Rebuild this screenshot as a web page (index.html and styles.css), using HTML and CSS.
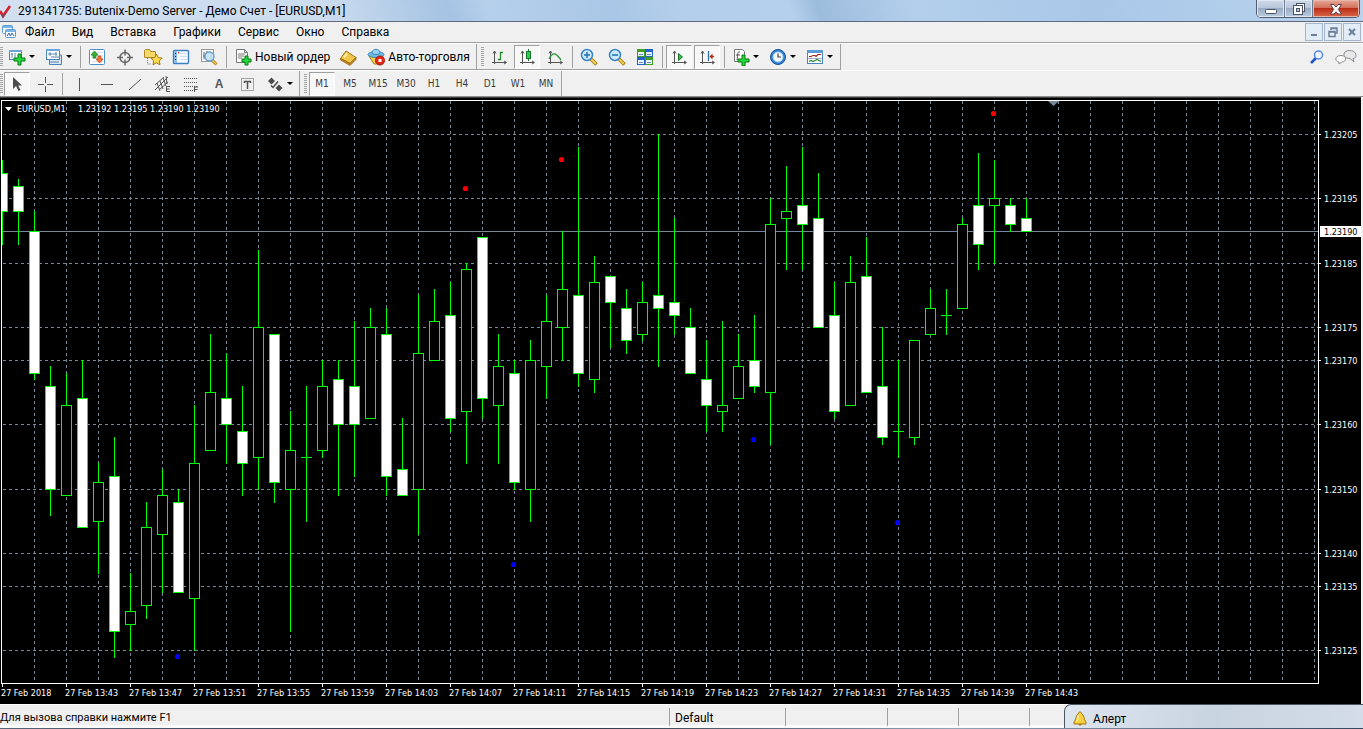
FILE: index.html
```html
<!DOCTYPE html>
<html lang="ru">
<head>
<meta charset="utf-8">
<title>291341735: Butenix-Demo Server - Демо Счет - [EURUSD,M1]</title>
<link rel="stylesheet" href="styles.css">
</head>
<body>
<header class="titlebar">
  <svg class="logo" width="12" height="18" viewBox="0 0 12 18"><path d="M0 9l3 5L10 4" fill="none" stroke="#d3202c" stroke-width="2.6"/><path d="M2 13l1 2 2-3" fill="none" stroke="#7c4a58" stroke-width="1.5"/></svg>
  <h1 class="title">291341735: Butenix-Demo Server - Демо Счет - [EURUSD,M1]</h1>
  <div class="winbuttons">
    <button class="win" aria-label="Свернуть"><svg width="14" height="14" viewBox="0 0 14 14"><rect x="1.500" y="7.500" width="11" height="4" rx="1" fill="#fff" stroke="#4a5363"/></svg></button>
    <button class="win" aria-label="Восстановить"><svg width="14" height="14" viewBox="0 0 14 14"><rect x="4.500" y="1.500" width="8" height="8" fill="#fff" stroke="#4a5363"/><rect x="1.500" y="3.500" width="9" height="9" fill="#fff" stroke="#4a5363"/><rect x="4.500" y="6.500" width="3" height="3" fill="#b9c8dc" stroke="#4a5363"/></svg></button>
    <button class="win close" aria-label="Закрыть"><svg width="14" height="14" viewBox="0 0 14 14"><path d="M1.500 2.500h3.500l2 2.500 2-2.500h3.500L9.300 7.500l3.200 4.500H9L7 9.700 5 12H1.500l3.200-4.500z" fill="#fff" stroke="#5b4048"/></svg></button>
  </div>
</header>
<nav class="menubar">
  <svg class="mdiicon" width="16" height="16" viewBox="0 0 16 16"><g fill="#fff" stroke="#5a9bd5"><rect x="1.500" y="1.500" width="10" height="8" rx="1"/><rect x="4.500" y="5.500" width="10" height="8" rx="1"/></g><path d="M2 3h9M5 7h9" stroke="#7db4e6" stroke-width="2"/><path d="M6 12l2-3 1.500 3 1.500-3 2 3" fill="none" stroke="#2b63ad"/></svg>
  <button class="menu">Файл</button><button class="menu">Вид</button><button class="menu">Вставка</button><button class="menu">Графики</button><button class="menu">Сервис</button><button class="menu">Окно</button><button class="menu">Справка</button>
  <div class="mdibuttons">
    <button class="mdi" aria-label="Свернуть окно"><svg width="12" height="12" viewBox="0 0 12 12"><path d="M3 9h6" stroke="#6c7f96" stroke-width="2"/></svg></button>
    <button class="mdi" aria-label="Восстановить окно"><svg width="12" height="12" viewBox="0 0 12 12"><path d="M4 4V2h6v5H8M4 2.500h6" fill="none" stroke="#6c7f96" stroke-width="1.500"/><path d="M2 5.500h6v5H2zM2 6h6" fill="none" stroke="#6c7f96" stroke-width="1.500"/></svg></button>
    <button class="mdi" aria-label="Закрыть окно"><svg width="12" height="12" viewBox="0 0 12 12"><path d="M3 3l6 6M9 3l-6 6" stroke="#6c7f96" stroke-width="2"/></svg></button>
  </div>
</nav>
<div class="toolrow">
  <div class="group">
    <span class="grip"></span>
    <button class="tool drop" aria-label="Новый график"><svg width="18" height="18" viewBox="0 0 18 18"><rect x="1.500" y="2.500" width="12" height="9" fill="#fff" stroke="#4783bd"/><path d="M1 3h13" stroke="#6ba5db" stroke-width="2"/><path d="M4 5v5M3 6h2M7 5v5" stroke="#5b86ae"/><path d="M10 6h3v4h4v3h-4v4h-3v-4H6v-3h4z" fill="#22d83c" stroke="#087b12"/></svg><i class="arrow"></i></button>
    <button class="tool drop" aria-label="Профили"><svg width="18" height="18" viewBox="0 0 18 18"><path d="M4.500 5v11.500h12V7h-3" fill="#d9e7f5" stroke="#4783bd"/><rect x="1.500" y="1.500" width="13" height="10" fill="#fff" stroke="#4783bd"/><path d="M1 2h14" stroke="#6ba5db" stroke-width="2"/><path d="M3 6h9M5 4v4M11 4v4M6 9h8M4 14h10" stroke="#5b86ae"/></svg><i class="arrow"></i></button>
    <span class="sep"></span>
    <button class="tool" aria-label="Обзор рынка"><svg width="18" height="18" viewBox="0 0 18 18"><rect x="1.500" y="1.500" width="15" height="15" rx="1" fill="#fff" stroke="#4a90cc"/><path d="M4 4.500h11M4 7.500h11M4 10.500h11M4 13.500h11" stroke="#d5e2ee"/><path d="M6.500 3L10 7H8v3H5V7H3z" fill="#36b52e" stroke="#16780f" stroke-width=".7"/><path d="M11.500 15L8 11h2V8h3v3h2z" fill="#f4763b" stroke="#bb3c10" stroke-width=".7"/></svg></button>
    <button class="tool" aria-label="Окно данных"><svg width="18" height="18" viewBox="0 0 18 18"><circle cx="9" cy="9.500" r="5" fill="none" stroke="#666" stroke-width="1.500"/><path d="M9 1.500v6M9 11.500v6M1 9.500h6M11 9.500h6" stroke="#666" stroke-width="1.500"/></svg></button>
    <button class="tool" aria-label="Навигатор"><svg width="20" height="18" viewBox="0 0 20 18"><path d="M1.500 9.500v-7l1-1h4l1 2h5v6z" fill="#f7d768" stroke="#b18a25"/><path d="M4.500 10v6h4" fill="none" stroke="#777" stroke-dasharray="1 1"/><path d="M13.500 6l1.700 3.600 4 .5-2.900 2.700.7 4-3.500-2-3.500 2 .7-4-2.900-2.700 4-.5z" fill="#ffdb4c" stroke="#a77917"/></svg></button>
    <button class="tool" aria-label="Терминал"><svg width="18" height="18" viewBox="0 0 18 18"><rect x="1.500" y="2.500" width="15" height="13" rx="1" fill="#f7fbff" stroke="#3b7fc0" stroke-width="1.400"/><rect x="2" y="3" width="3" height="12" fill="#8bbce8"/><path d="M8 5.500h7M8 8.500h7M8 11.500h7" stroke="#cfdfee"/><path d="M3 5.500h1M3 8.500h1M3 11.500h1" stroke="#123"/><path d="M6.500 4v1.500" stroke="#d22"/></svg></button>
    <button class="tool" aria-label="Тестер стратегий"><svg width="18" height="18" viewBox="0 0 18 18"><rect x="1.500" y="1.500" width="12" height="12" fill="#f7f7f7" stroke="#999"/><path d="M4 11V4M7 6V3M11 12V5M3 8h2" stroke="#666"/><path d="M12.500 12.500l4 4" stroke="#a7791a" stroke-width="3"/><path d="M12.500 12.500l4 4" stroke="#f2c94d" stroke-width="1.500"/><circle cx="9.500" cy="8.500" r="4.500" fill="#c2e4f9" fill-opacity=".85" stroke="#669fcb" stroke-width="1.400"/></svg></button>
    <span class="sep"></span>
    <button class="tool wide"><svg width="18" height="18" viewBox="0 0 18 18"><path d="M2.500 1.500h8l3 3v10h-11z" fill="#fff" stroke="#777"/><path d="M10.500 1.500v3h3M4 6h7M4 8h6M4 10h4" fill="none" stroke="#777"/><path d="M11 8h3v3h3v3h-3v3h-3v-3H8v-3h3z" fill="#22d83c" stroke="#087b12"/></svg>Новый ордер</button>
    <button class="tool" aria-label="MetaEditor"><svg width="18" height="18" viewBox="0 0 18 18"><path d="M1.500 10.500L7 3l10 6.500-6 6z" fill="#f0c648" stroke="#a8741a"/><path d="M1.500 10.500v1.500l9.500 5.500 6-6V9.500l-6 6z" fill="#c98c1e" stroke="#8e5d10" stroke-width=".7"/><path d="M5 9.500L8 5.500" stroke="#fff2ad" stroke-width="2"/></svg></button>
    <button class="tool wide"><svg width="18" height="18" viewBox="0 0 18 18"><path d="M2 8l5 8h6l3-8z" fill="#f6cd4d" stroke="#a8781b"/><ellipse cx="9" cy="6.500" rx="8" ry="3" fill="#6fb8e2" stroke="#3f88b8"/><path d="M5 5c0-5 8-5 8 0-2 2-6 2-8 0z" fill="#98d2f2" stroke="#3f88b8"/><circle cx="13" cy="12.500" r="4.500" fill="#e32b18" stroke="#a0170c"/><rect x="11.500" y="11" width="3" height="3" fill="#fff"/></svg>Авто-торговля</button>
  </div>
  <div class="group">
    <span class="grip"></span>
    <button class="tool" aria-label="Бары"><svg width="18" height="18" viewBox="0 0 18 18"><path d="M4.500 3v13M2 14.500h14M3 5.500l1.500-2.500L6 5.500M14 13l2.500 1.500L14 16" fill="none" stroke="#555"/><path d="M10.500 4v8M10 4.500h3M8 11.500h3" stroke="#2a8a34" stroke-width="1.300" fill="none"/></svg></button>
    <button class="tool on" aria-label="Японские свечи"><svg width="18" height="18" viewBox="0 0 18 18"><path d="M4.500 3v13M2 14.500h14M3 5.500l1.500-2.500L6 5.500M14 13l2.500 1.500L14 16" fill="none" stroke="#555"/><path d="M10.500 1v12" stroke="#18742a"/><rect x="8.500" y="3.500" width="4" height="7" fill="#2bd04a" stroke="#18742a"/></svg></button>
    <button class="tool" aria-label="Линия"><svg width="18" height="18" viewBox="0 0 18 18"><path d="M4.500 3v13M2 14.500h14M3 5.500l1.500-2.500L6 5.500M14 13l2.500 1.500L14 16" fill="none" stroke="#555"/><path d="M3 11c4-8 7-6 12 1" stroke="#2a9a3a" stroke-width="1.300" fill="none"/></svg></button>
    <span class="sep"></span>
    <button class="tool" aria-label="Увеличить"><svg width="18" height="18" viewBox="0 0 18 18"><path d="M11 11l5.500 5.500" stroke="#9b7213" stroke-width="3.600"/><path d="M11 11l5 5" stroke="#f5d04e" stroke-width="2"/><circle cx="7" cy="7" r="5.500" fill="#cdebfd" stroke="#3a84c4" stroke-width="1.500"/><path d="M7 4v6M4 7h6" stroke="#2873b4" stroke-width="1.600"/></svg></button>
    <button class="tool" aria-label="Уменьшить"><svg width="18" height="18" viewBox="0 0 18 18"><path d="M11 11l5.500 5.500" stroke="#9b7213" stroke-width="3.600"/><path d="M11 11l5 5" stroke="#f5d04e" stroke-width="2"/><circle cx="7" cy="7" r="5.500" fill="#cdebfd" stroke="#3a84c4" stroke-width="1.500"/><path d="M4 7h6" stroke="#2873b4" stroke-width="1.600"/></svg></button>
    <button class="tool" aria-label="Упорядочить окна"><svg width="18" height="18" viewBox="0 0 18 18"><path d="M1 1h8v8H1zM9 9h8v8H9z" fill="#3e9e22"/><path d="M9 1h8v8H9zM1 9h8v8H1z" fill="#2462c8"/><path d="M2 4h6v4H2zM10 4h6v4h-6zM2 12h6v4H2zM10 12h6v4h-6z" fill="#eaf3fb"/><path d="M3 6.500h4M11 6.500h4M3 14.500h4M11 14.500h4" stroke="#6593bb"/></svg></button>
    <span class="sep"></span>
    <button class="tool on" aria-label="Автопрокрутка"><svg width="18" height="18" viewBox="0 0 18 18"><path d="M4.500 3v13M2 14.500h14M3 5.500l1.500-2.500L6 5.500M14 13l2.500 1.500L14 16" fill="none" stroke="#555"/><path d="M8.500 5.500v7l4-3.500z" fill="#35c04a" stroke="#18742a"/></svg></button>
    <button class="tool on" aria-label="Сдвиг графика"><svg width="18" height="18" viewBox="0 0 18 18"><path d="M4.500 3v13M2 14.500h14M3 5.500l1.500-2.500L6 5.500M14 13l2.500 1.500L14 16" fill="none" stroke="#555"/><path d="M10.500 3v10" stroke="#276eaa" stroke-width="1.300"/><path d="M16 8.500h-3" stroke="#b23011" stroke-width="1.500"/><path d="M11.500 8.500l3-3v6z" fill="#b23011"/></svg></button>
    <span class="sep"></span>
    <button class="tool drop" aria-label="Индикаторы"><svg width="18" height="18" viewBox="0 0 18 18"><path d="M2.500 1.500h8l2 2v10h-10z" fill="#fff" stroke="#777"/><path d="M8 4c-3-1-2 3-3 8M4 7h4" fill="none" stroke="#555"/><path d="M10 7h3v4h4v3h-4v4h-3v-4H6v-3h4z" fill="#22d83c" stroke="#087b12"/></svg><i class="arrow"></i></button>
    <button class="tool drop" aria-label="Периоды"><svg width="18" height="18" viewBox="0 0 18 18"><circle cx="9" cy="9" r="7.500" fill="#2f83d3" stroke="#125299"/><circle cx="9" cy="9" r="5" fill="#f4f9fd" stroke="#a8cdec"/><path d="M9 5.500V9h3" fill="none" stroke="#444" stroke-width="1.200"/></svg><i class="arrow"></i></button>
    <button class="tool drop" aria-label="Шаблоны"><svg width="18" height="18" viewBox="0 0 18 18"><rect x="1.500" y="2.500" width="15" height="13" fill="#fff" stroke="#4783bd"/><path d="M1 3.500h16" stroke="#5b9bd5" stroke-width="3"/><path d="M3 8.500h2l2-1h2l1 1 2-2h3" fill="none" stroke="#9a2a17" stroke-width="1.200"/><path d="M2 10.500h14" stroke="#aac"/><path d="M3 13.500l2-1 2 1 2-1 2-1 4 2" fill="none" stroke="#2a8a34" stroke-width="1.200"/></svg><i class="arrow"></i></button>
  </div>
  <div class="side">
    <button class="bare" aria-label="Поиск"><svg width="16" height="16" viewBox="0 0 16 16"><path d="M2 14l5-5" stroke="#1f56c4" stroke-width="2.600"/><circle cx="9.500" cy="6" r="4" fill="#f3f7ff" stroke="#4f86e0" stroke-width="1.500"/></svg></button>
    <button class="bare" aria-label="Сообщения"><svg width="22" height="16" viewBox="0 0 22 16"><path d="M14.500 1.500c8 0 8 8 3.500 8l1 3.500-4-3.500c-8 0-8-8-.5-8z" fill="#e8e8ec" stroke="#8b8b90"/><path d="M6 6.500c6 0 6 6 1 6.500l-3 2v-2c-5-1-4-6.500 2-6.500z" fill="#fff" stroke="#8b8b90"/></svg></button>
  </div>
</div>
<div class="toolrow last">
  <div class="group">
    <span class="grip"></span>
    <button class="tool on" aria-label="Курсор"><svg width="18" height="18" viewBox="0 0 18 18"><path d="M5 2v12l3-3 2.500 5 2-1-2.300-4.500H14z" fill="#4c4c4c"/></svg></button>
    <button class="tool" aria-label="Перекрестие"><svg width="18" height="18" viewBox="0 0 18 18"><path d="M9.500 2v6M9.500 11v6M2 9.500h6M11 9.500h6" stroke="#555"/></svg></button>
    <span class="sep"></span>
    <button class="tool" aria-label="Вертикальная линия"><svg width="18" height="18" viewBox="0 0 18 18"><path d="M9.500 3v13" stroke="#555"/></svg></button>
    <button class="tool" aria-label="Горизонтальная линия"><svg width="18" height="18" viewBox="0 0 18 18"><path d="M3 9.500h12" stroke="#555"/></svg></button>
    <button class="tool" aria-label="Трендовая линия"><svg width="18" height="18" viewBox="0 0 18 18"><path d="M3 15L15 4" stroke="#555"/></svg></button>
    <button class="tool" aria-label="Канал"><svg width="18" height="18" viewBox="0 0 18 18"><path d="M1 15L14 2M1 10l9-8M5 15l9-8M3 8l3 8M6 6l3 8M9 3l3 8M12 1l1 8" stroke="#555"/><path d="M16 11.500h-3.500v5H16M12.500 14h3" fill="none" stroke="#555"/></svg></button>
    <button class="tool" aria-label="Фибоначчи"><svg width="18" height="18" viewBox="0 0 18 18"><path d="M2 3.500h14M2 7.500h14M2 11.500h14M2 15.500h9" stroke="#555" stroke-dasharray="1 1"/><path d="M12.500 17v-5H16M12.500 14.500h3" fill="none" stroke="#555"/></svg></button>
    <button class="tool letter">A</button>
    <button class="tool" aria-label="Метка"><svg width="18" height="18" viewBox="0 0 18 18"><rect x="3.500" y="3.500" width="12" height="12" fill="none" stroke="#555" stroke-dasharray="1 1"/><path d="M6 6.500h7M9.500 6v8M6.500 6v2M12.500 6v2" stroke="#555" stroke-width="1.500"/></svg></button>
    <button class="tool drop" aria-label="Стрелки"><svg width="18" height="18" viewBox="0 0 18 18"><path d="M5.500 2.500l3.500 3.500-3.500 3.500L2 6zM13 9.500l3.500 3.500-3.500 3.500L9.500 13z" fill="#4c4c4c"/><path d="M5 10.500l2 2 5-6" fill="none" stroke="#4c4c4c" stroke-width="1.500"/></svg><i class="arrow"></i></button>
  </div>
  <div class="group">
    <span class="grip"></span>
    <button class="tool tf on">M1</button><button class="tool tf">M5</button><button class="tool tf">M15</button><button class="tool tf">M30</button><button class="tool tf">H1</button><button class="tool tf">H4</button><button class="tool tf">D1</button><button class="tool tf">W1</button><button class="tool tf">MN</button>
  </div>
</div>
<main class="chart"><svg id="chart" class="plot" role="img" aria-label="EURUSD,M1"></svg></main>
<footer class="status">
  <span class="cell help">Для вызова справки нажмите F1</span>
  <span class="cell profile">Default</span>
  <span class="cell mid"></span>
  <span class="cell small"></span>
  <span class="cell small"></span>
  <span class="cell rest"></span>
</footer>
<div class="edge"></div>
<aside class="alert"><svg width="16" height="16" viewBox="0 0 16 16"><path d="M6 13h4l-2 2z" fill="#a8741a"/><path d="M8 1c1 0 1.500.5 1.500 1.500 3 1.500 2 6 4.500 8.500v2H2v-2c2.500-2.500 1.500-7 4.500-8.500C6.500 1.500 7 1 8 1z" fill="#f7cf3c" stroke="#a8741a"/><path d="M6.500 4.500c-1 2-.5 4-1.500 6" stroke="#fff4b8" stroke-width="1.500" fill="none"/></svg><span>Алерт</span></aside>
<script src="chart.js"></script>
</body>
</html>
```
FILE: styles.css
```css
* { box-sizing: border-box; }
body {
  margin: 0;
  height: 100vh;
  display: flex;
  flex-direction: column;
  overflow: hidden;
  position: relative;
  background: #f0f0f0;
  color: #000;
  font: 12px/16px Roboto, "Open Sans", sans-serif;
}
button {
  margin: 0;
  padding: 0;
  border: 0;
  background: none;
  color: inherit;
  font: inherit;
}
svg { display: block; flex: none; }

.titlebar {
  display: flex;
  align-items: center;
  flex: none;
  height: 22px;
  border-bottom: 1px solid #5f6b7c;
  background: linear-gradient(70deg, #d2e0f1 0, #cbdcef 24%, #a5c3e3 33%, #b6d0ec 36%, #a9c7e6 45%, #b4cfec 50%, #b5d0ed 58%, #9dbddd 60%, #b3cfec 67%, #a9c8e8 80%, #b9d3ee 100%);
}
.title {
  flex: 1;
  margin: 0 0 0 6px;
  font-size: 12px;
  font-weight: 400;
}
.winbuttons {
  display: flex;
  align-self: flex-start;
  height: 18px;
  margin-right: 3px;
  border: 1px solid #505c6e;
  border-top: 0;
  border-radius: 0 0 5px 5px;
  overflow: hidden;
}
.win {
  display: flex;
  align-items: center;
  justify-content: center;
  width: 28px;
  border-right: 1px solid #6f7b8d;
  background: linear-gradient(#d0dbe9, #b7c6d9 45%, #97abc4 50%, #bccde0);
  box-shadow: inset 0 0 0 1px #dfe8f2;
}
.win.close {
  width: 46px;
  border-right: 0;
  background: linear-gradient(#e5a99a, #d4705a 45%, #bb2e17 50%, #d9674b);
  box-shadow: inset 0 0 0 1px #e9b5a8;
}

.menubar {
  display: flex;
  align-items: center;
  flex: none;
  height: 21px;
  border-bottom: 1px solid #a0a0a0;
}
.mdiicon { margin-left: 1px; }
.menu { padding: 0 9px 0 8px; }
.mdibuttons { display: flex; gap: 1px; margin: 0 2px 0 auto; }
.mdi {
  display: flex;
  align-items: center;
  justify-content: center;
  width: 18px;
  height: 18px;
  border: 1px solid #a3b6cb;
  background: #e3edf8;
}

.toolrow {
  display: flex;
  flex: none;
  height: 27px;
  border-top: 1px solid #fff;
}
.toolrow.last { border-bottom: 1px solid #8c8c8c; }
.group {
  display: flex;
  align-items: center;
  padding-right: 2px;
  border-right: 1px solid #a0a0a0;
  border-bottom: 1px solid #a0a0a0;
}
.last .group { border-bottom: 0; padding-right: 1px; }
.group + .group { padding-left: 4px; }
.grip {
  width: 3px;
  height: 20px;
  background: repeating-linear-gradient(#a6a6a6 0 1px, #f0f0f0 1px 2px);
}
.group + .group .grip { margin-right: 1px; }
.sep { width: 1px; height: 22px; margin: 0 2px 0 3px; background: #a0a0a0; }
.tool {
  display: flex;
  align-items: center;
  justify-content: center;
  width: 28px;
  height: 24px;
}
.tool.on {
  border: 1px solid #a0a0a0;
  border-right-color: #fff;
  border-bottom-color: #fff;
  background: #f8f8f8;
  width: 26px;
  margin: 0 1px;
}
.tool.drop { width: 37px; justify-content: flex-start; padding-left: 5px; gap: 3px; }
.tool.wide { width: auto; padding: 0 4px 0 5px; gap: 3px; }
.arrow {
  border: 3px solid transparent;
  border-top-color: #000;
  border-bottom: 0;
}
.tf { color: #3c3c3c; font: 10px/14px "DejaVu Sans Condensed", "DejaVu Sans", sans-serif; }
.letter { color: #555; font: bold 12px/14px "Liberation Sans", sans-serif; }
.side { display: flex; align-items: center; gap: 10px; margin: 0 6px 0 auto; }

.chart {
  flex: 1;
  min-height: 0;
  margin-right: 2px;
  border-top: 1px solid #404040;
  background: #000;
}
.plot { width: 100%; height: 100%; }
.plot text { font: 9px "DejaVu Sans Condensed", "DejaVu Sans", sans-serif; fill: #fff; white-space: pre; }
.plot .current { fill: #000; }

.status {
  display: flex;
  align-items: flex-start;
  flex: none;
  height: 24px;
  padding-top: 3px;
  border-top: 1px solid #fff;
  border-bottom: 3px solid #fcfcfc;
}
.cell { height: 18px; padding: 2px 0 0 5px; overflow: hidden; border-right: 1px solid #a0a0a0; }
.help { flex: 1; padding-left: 0; font-size: 11px; }
.profile { width: 116px; }
.mid { width: 102px; }
.small { width: 71px; }
.rest { width: 333px; border-right: 0; }
.edge { flex: none; height: 1px; background: linear-gradient(90deg, #55657a, #202c3c 40%, #8fa5b8 70%, #33485f); }
.alert {
  position: absolute;
  right: 0;
  bottom: 1px;
  display: flex;
  align-items: center;
  gap: 5px;
  width: 299px;
  height: 24px;
  padding: 4px 0 0 7px;
  border: 1px solid #4b5663;
  border-width: 1px 0 0 1px;
  border-radius: 7px 0 0 0;
  background: linear-gradient(90deg, #dde5ee, #c9d4e1 50%, #d3dce7);
}
```
FILE: chart.js
```js
// Prices are the last three digits of 1.23xxx: [high, open, close, low]
const candles = [
  [201,199,193,188],[198,197,193,188],[193,190,168,167],[169,166,150,146],[168,149,163,149],
  [170,164,144,144],[154,145,151,137],[158,152,128,124],[137,129,131,125],[148,132,144,130],
  [153,143,149,134],[150,148,134,134],[163,133,154,125],[174,156,165,156],[171,164,160,154],
  [166,159,154,149],[187,155,175,150],[174,174,151,148],[162,150,156,128],[166,155,155,145],
  [170,156,166,155],[170,167,160,149],[176,166,160,152],[178,161,175,161],[178,174,152,149],
  [161,153,149,149],[180,150,171,143],[181,170,176,170],[182,177,161,159],[185,162,184,154],
  [189,189,164,161],[174,163,169,154],[170,168,151,150],[173,150,170,145],[180,169,176,164],
  [190,175,181,170],[203,180,168,166],[186,167,182,165],[183,183,179,172],[181,178,173,171],
  [182,174,179,173],[205,180,178,169],[192,179,177,174],[178,175,168,168],[173,167,163,159],
  [176,162,163,159],[174,164,169,164],[177,170,166,165],[195,165,191,157],[200,192,193,184],
  [203,194,191,184],[199,192,175,175],[182,177,162,161],[186,163,182,163],[189,183,165,165],
  [175,166,158,157],[170,159,159,155],[173,158,173,157],[181,174,178,174],[181,177,177,174],
  [192,178,191,178],[202,194,188,184],[201,194,195,185],[195,194,191,190],[195,192,190,190]
];
const levels = [205,195,185,175,170,160,150,140,135,125];
const times = ['2018','13:43','13:47','13:51','13:55','13:59','14:03','14:07','14:11','14:15','14:19','14:23','14:27','14:31','14:35','14:39','14:43'];
const dots = [
  [465,90,'#f00'],[561,61,'#f00'],[993,15,'#f00'],
  [177,558,'#00f'],[513,466,'#00f'],[753,341,'#00f'],[897,424,'#00f']
];
const GREEN = '#00ff00', GRID = '#778899';
const svg = document.getElementById('chart');
const y = p => Math.round(35.9 + (205 - p) * 6.452);

function add(name, attrs, text) {
  const el = document.createElementNS('http://www.w3.org/2000/svg', name);
  for (const key in attrs) el.setAttribute(key, attrs[key]);
  if (text) el.textContent = text;
  svg.appendChild(el);
}
function bar(x, top, w, h, fill) {
  add('rect', { x, y: top, width: w, height: h, fill, 'shape-rendering': 'crispEdges' });
}
function dashed(x1, y1, x2, y2) {
  add('line', { x1, y1, x2, y2, stroke: GRID, 'stroke-dasharray': '3 3', 'shape-rendering': 'crispEdges' });
}
function draw() {
  svg.replaceChildren();
  const right = svg.clientWidth - 43, bottom = svg.clientHeight - 21;
  for (let x = 34; x < right; x += 32) dashed(x + 0.5, 3, x + 0.5, bottom);
  levels.forEach(p => dashed(3, y(p) + 0.5, right, y(p) + 0.5));
  bar(2, y(190), right - 2, 1, GRID);
  candles.forEach(([high, open, close, low], i) => {
    const x = 2 + i * 16, top = y(Math.max(open, close)), end = y(Math.min(open, close));
    bar(x, y(high), 1, y(low) - y(high) + 1, GREEN);
    bar(x - 5, top, 11, end - top + 1, GREEN);
    if (end > top) bar(x - 4, top + 1, 9, end - top - 1, open > close ? '#fff' : '#000');
  });
  dots.forEach(([cx, cy, fill]) => add('circle', { cx: cx + 0.5, cy: cy + 0.5, r: 2.6, fill }));
  add('path', { d: 'M1048 3h11l-5.500 5z', fill: GRID });
  bar(0, 0, 1, bottom, '#000');
  bar(1, 2, right - 1, 1, '#fff');
  bar(1, 2, 1, bottom - 1, '#fff');
  bar(right, 2, 1, bottom - 1, '#fff');
  bar(1, bottom, right, 1, '#fff');
  add('path', { d: 'M5 9h7l-3.500 4z', fill: '#fff' });
  add('text', { x: 17, y: 14 }, 'EURUSD,M1');
  add('text', { x: 78, y: 14 }, '1.23192 1.23195 1.23190 1.23190');
  levels.forEach(p => {
    bar(right, y(p), 3, 1, '#fff');
    add('text', { x: right + 6, y: y(p) + 4 }, '1.23' + p);
  });
  bar(right + 2, y(190) - 5, 41, 11, '#fff');
  add('text', { x: right + 6, y: y(190) + 4, class: 'current' }, '1.23190');
  times.forEach((t, i) => {
    bar(2 + i * 64, bottom, 1, 4, '#fff');
    add('text', { x: 1 + i * 64, y: bottom + 13 }, '27 Feb ' + t);
  });
}
draw();
window.addEventListener('resize', draw);
```
